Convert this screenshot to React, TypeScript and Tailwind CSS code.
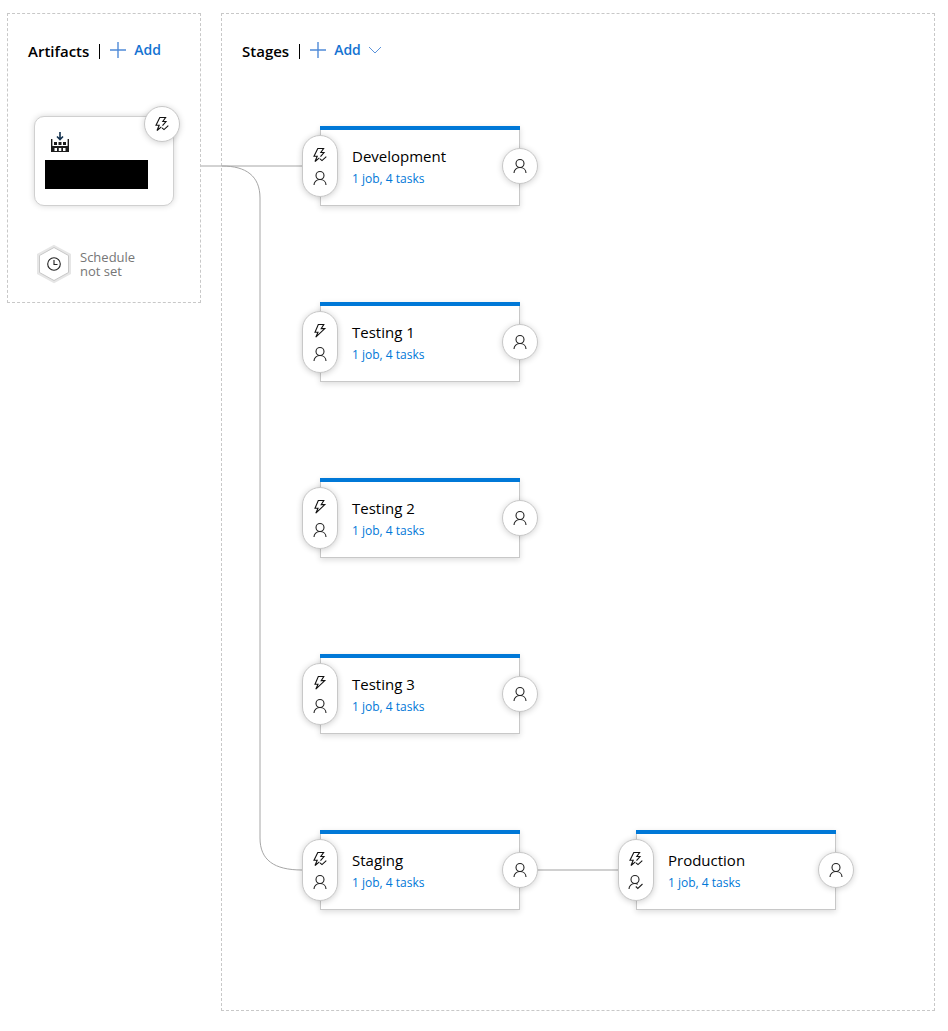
import type { ReactNode } from "react";

interface Stage {
    name: string;
    autoTrigger?: boolean;
    approval?: boolean;
    next?: Stage;
}

const stages: Stage[] = [
    { name: "Development", autoTrigger: true },
    { name: "Testing 1" },
    { name: "Testing 2" },
    { name: "Testing 3" },
    { name: "Staging", autoTrigger: true, next: { name: "Production", autoTrigger: true, approval: true } },
];

const App = () => (
    <main className="flex items-start gap-5 pt-[13px] pr-[13px] pb-5 pl-[7px] bg-white text-black font-['Open_Sans','Noto_Sans',sans-serif]">
        <section className="w-[194px] shrink-0 border border-dashed border-[#c8c8c8] pb-[18px]">
            <PanelHeader title="Artifacts" />
            <ArtifactCard />
            <button className="mt-[38px] ml-7 flex items-center gap-2 text-left">
                <ScheduleIcon />
                <span className="flex flex-col text-[13px] leading-[14px] text-[#767676]">
                    <span>Schedule</span>
                    <span>not set</span>
                </span>
            </button>
        </section>

        <section className="relative grow border border-dashed border-[#c8c8c8] pb-[100px]">
            <PanelHeader title="Stages" hasMenu />
            <Connectors />
            <ul className="relative mt-[64px] ml-[98px] flex flex-col gap-24">
                {stages.map((stage) => (
                    <li key={stage.name} className="flex items-center">
                        <StageCard stage={stage} />
                        {stage.next && (
                            <>
                                <div className="w-[116px] h-[2px] bg-[#d0d0d0]"></div>
                                <StageCard stage={stage.next} />
                            </>
                        )}
                    </li>
                ))}
            </ul>
        </section>
    </main>
);

const PanelHeader = ({ title, hasMenu }: { title: string, hasMenu?: boolean }) => (
    <header className="flex items-center h-12 pt-[26px] pl-5">
        <h2 className="text-[15px] leading-5 font-semibold">{title}</h2>
        <div className="ml-[10px] w-px h-[15px] bg-black"></div>
        <button className="mb-[2px] ml-[10px] flex items-center text-[14px] leading-5 font-semibold text-[#1473d2]">
            <PlusIcon />
            <span className="ml-2">Add</span>
            {hasMenu && <ChevronIcon />}
        </button>
    </header>
);

const ArtifactCard = () => (
    <div className="relative mt-[54px] ml-[26px] w-[140px] h-[90px] rounded-[10px] border border-[#d0d0d0] bg-white shadow-[0_0_6px_rgba(0,0,0,0.16)] pt-[15px] pl-[10px]">
        <BuildIcon />
        <div className="mt-2 w-[103px] h-[29px] bg-black"></div>
        <RoundButton label="Continuous deployment trigger" className="absolute -top-[11px] -right-[7px]">
            <BoltIcon checked />
        </RoundButton>
    </div>
);

const StageCard = ({ stage }: { stage: Stage }) => (
    <article className="relative w-[200px] h-20 border border-t-0 border-[#c8c8c8] bg-white shadow-[0_2px_6px_rgba(0,0,0,0.14)]">
        <div className="-mx-px h-1 bg-[#0078d7]"></div>
        <div className="pt-[15px] pl-[31px]">
            <h3 className="text-[15px] leading-[22px]">{stage.name}</h3>
            <a href="#tasks" className="block text-[12px] leading-6 text-[#0078d7]">1 job, 4 tasks</a>
        </div>
        <button
            aria-label={`${stage.name} pre-deployment conditions`}
            className="absolute top-[9px] -left-[19px] w-9 h-[62px] rounded-full border border-[#c8c8c8] bg-white shadow-[0_1px_6px_rgba(0,0,0,0.2)] flex flex-col items-center justify-center gap-[7px]"
        >
            <BoltIcon checked={stage.autoTrigger} />
            <PersonIcon checked={stage.approval} />
        </button>
        <RoundButton label={`${stage.name} post-deployment conditions`} className="absolute top-[22px] -right-[19px]">
            <PersonIcon />
        </RoundButton>
    </article>
);

const RoundButton = ({ label, className, children }: { label: string, className: string, children: ReactNode }) => (
    <button
        aria-label={label}
        className={`${className} w-9 h-9 rounded-full border border-[#c8c8c8] bg-white shadow-[0_1px_6px_rgba(0,0,0,0.18)] flex items-center justify-center`}
    >
        {children}
    </button>
);

// Lines from the artifacts panel to the first and last stage
const Connectors = () => (
    <svg width="102" height="740" viewBox="0 0 102 740" fill="none" stroke="#a6a6a6" className="absolute top-[142px] -left-[21px]">
        <path d="M0 10H102" />
        <path d="M21 10C45 10 59 20 59 42V682C59 704 73 714 101 714" />
    </svg>
);

// SVG Icons
const PlusIcon = () => (
    <svg width="16" height="16" viewBox="0 0 16 16" fill="none" stroke="#4f8ad8" strokeWidth="1.4">
        <path d="M8 0V16M0 8H16" />
    </svg>
);
const ChevronIcon = () => (
    <svg width="14" height="8" viewBox="0 0 14 8" fill="none" stroke="#5b94dc" className="ml-[7px]">
        <path d="M1 1L7 7L13 1" />
    </svg>
);
const BoltIcon = ({ checked }: { checked?: boolean }) => (
    <svg width="16" height="16" viewBox="0 0 16 16" fill="none" stroke="#111" strokeWidth="1.1">
        {checked ? (
            <>
                <path d="M7.4 10.8L3 14.5L5.2 9.3H2L5.8 1.5H11.6L8.8 5.5H12L8.5 9.6" />
                <path d="M8 11.8L10 13.6L14.3 9.6" />
            </>
        ) : (
            <path d="M6.3 1.5H11.8L9.2 5.6H12.8L3.8 14.2L6 9.3H3Z" />
        )}
    </svg>
);
const PersonIcon = ({ checked }: { checked?: boolean }) => (
    <svg width="16" height="16" viewBox="0 0 16 16" fill="none" stroke="#222" strokeWidth="1.1">
        {checked ? (
            <>
                <circle cx="7" cy="5.5" r="4" />
                <path d="M1 15C1 11.8 3.5 9.5 7 9.5C8.2 9.5 9 9.8 9.8 10.3" />
                <path d="M7.8 12.5L9.8 14.5L14.5 10" />
            </>
        ) : (
            <>
                <circle cx="8" cy="5.5" r="4" />
                <path d="M2 15C2 11.8 4.5 9.5 8 9.5S14 11.8 14 15" />
            </>
        )}
    </svg>
);
const BuildIcon = () => (
    <svg width="20" height="20" viewBox="0 0 20 20" fill="none" className="ml-[5px]">
        <path d="M10 0V7M7 4.5L10 7.5L13 4.5" stroke="#12304d" strokeWidth="1.6" />
        <path d="M1 7H2.4V14H17.6V7H19V20H1Z" fill="#1c1c1c" />
        <path d="M4 10H7V13H4ZM8.5 10H11.5V13H8.5ZM13 10H16V13H13Z" fill="#1c1c1c" />
        <path d="M4.5 16H7V19H4.5ZM8.8 16H11.3V19H8.8ZM13 16H15.5V19H13Z" fill="#fff" />
    </svg>
);
const ScheduleIcon = () => (
    <svg width="36" height="40" viewBox="0 0 36 40" fill="none">
        <path d="M18 2.5L33.5 11V29L18 37.5L2.5 29V11Z" stroke="#e6e6e6" strokeWidth="3" />
        <path d="M18 3.5L32.5 11.5V28.5L18 36.5L3.5 28.5V11.5Z" fill="#fff" stroke="#c8c8c8" />
        <circle cx="18" cy="20" r="6.3" stroke="#222" strokeWidth="1.1" />
        <path d="M18 16V20.5H21.5" stroke="#222" strokeWidth="1.1" />
    </svg>
);

export default App;
